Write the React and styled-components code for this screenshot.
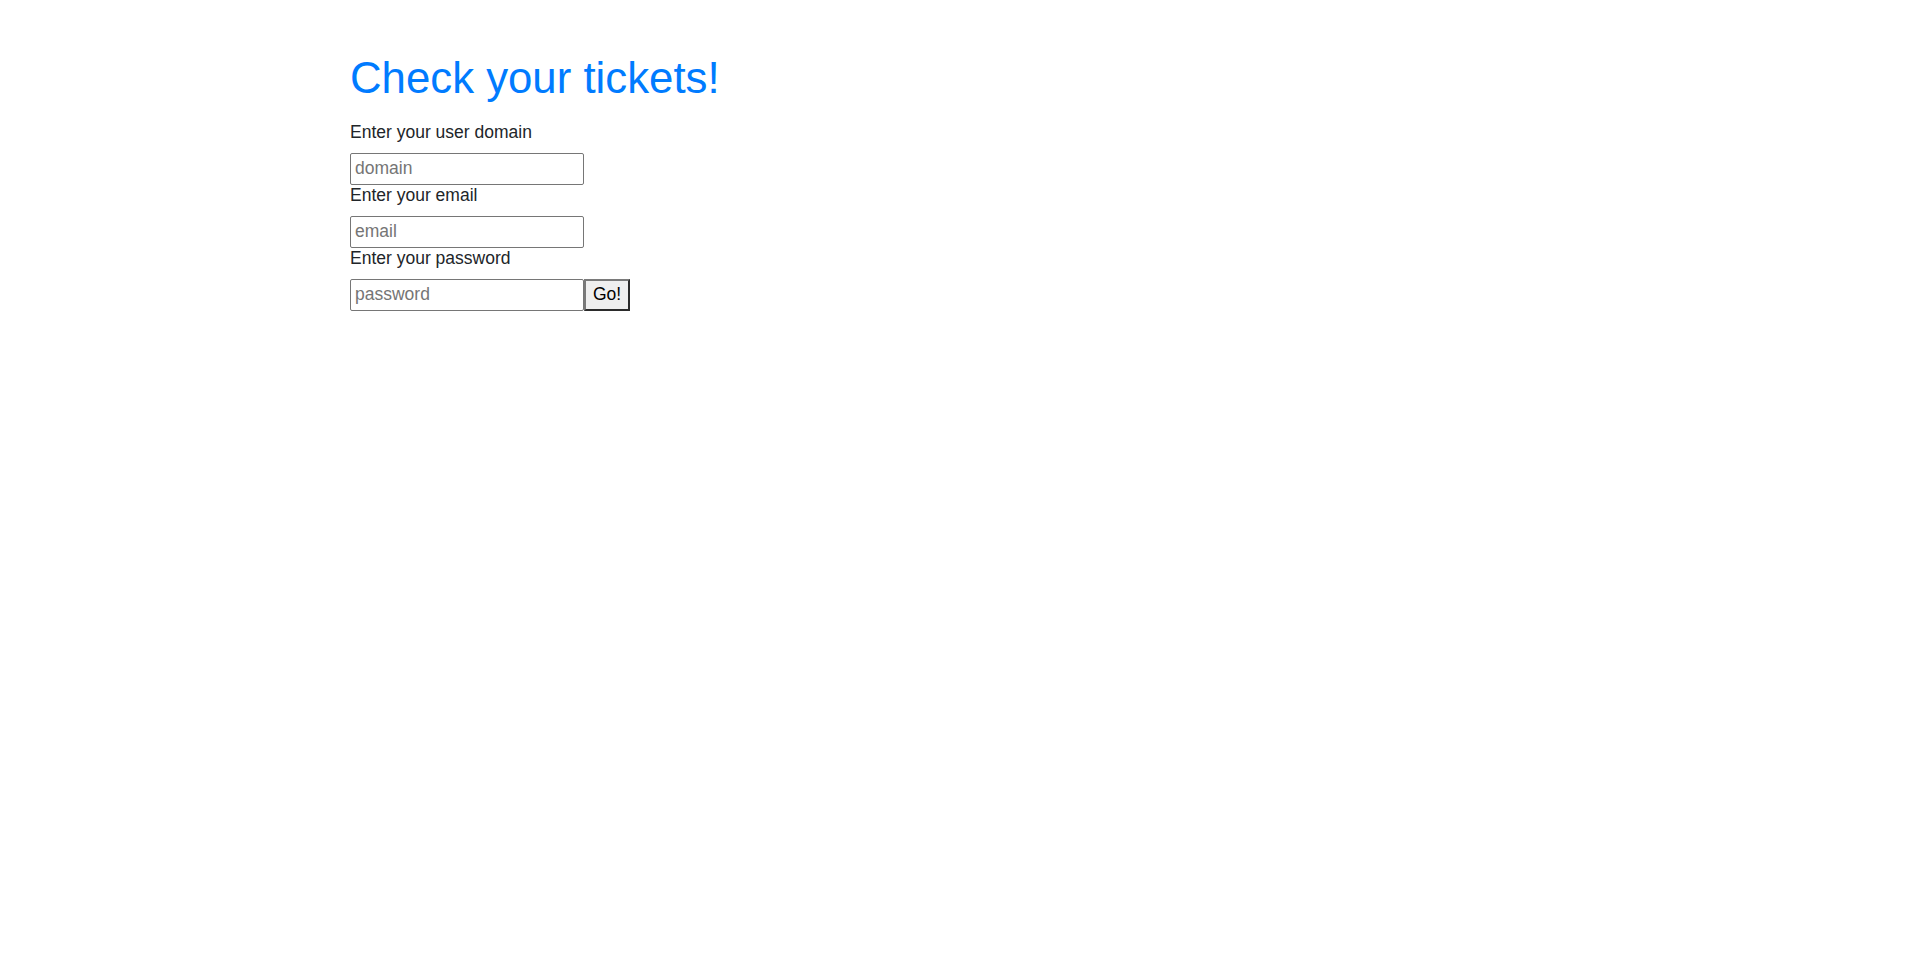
import React from "react";
import styled, { createGlobalStyle } from "styled-components";

const Global = createGlobalStyle`
  html, body { margin: 0; padding: 0; background: #fff; }
  body {
    font-family: "Liberation Sans", Arial, sans-serif;
    font-size: 17.5px;
    color: #212529;
  }
`;

const Page = styled.main`
  padding: 52px 0 0 350px;
`;

const Title = styled.h1`
  margin: 0 0 17px;
  font-size: 43.75px;
  font-weight: 400;
  line-height: 1.2;
  color: #007bff;
`;

const Form = styled.form`
  display: flex;
  flex-direction: column;
  align-items: flex-start;
`;

const Label = styled.label`
  display: block;
  line-height: 21px;
  margin: 0 0 10px;
`;

const Row = styled.div`
  display: flex;
  align-items: stretch;
`;

const Input = styled.input`
  box-sizing: border-box;
  width: 234px;
  height: 32px;
  margin: 0;
  padding: 1px 4px;
  border: 1px solid #767676;
  border-radius: 2px;
  font-family: "Liberation Sans", Arial, sans-serif;
  font-size: 17.5px;
  color: #212529;
  background: #fff;
  &::placeholder { color: #757575; }
`;

const Button = styled.button`
  box-sizing: border-box;
  width: 46px;
  height: 32px;
  margin: 0;
  padding: 0 6px;
  background: #efefef;
  border-style: solid;
  border-width: 2px;
  border-color: #7a7a7a #2b2b2b #2b2b2b #7a7a7a;
  font-family: "Liberation Sans", Arial, sans-serif;
  font-size: 17.5px;
  color: #000;
`;

export default function App() {
  return (
    <>
      <Global />
      <Page>
        <Title>Check your tickets!</Title>
        <Form onSubmit={(e) => e.preventDefault()}>
          <Label htmlFor="domain">Enter your user domain</Label>
          <Row>
            <Input id="domain" placeholder="domain" />
          </Row>
          <Label htmlFor="email">Enter your email</Label>
          <Row>
            <Input id="email" placeholder="email" />
          </Row>
          <Label htmlFor="password">Enter your password</Label>
          <Row>
            <Input id="password" type="password" placeholder="password" />
            <Button type="submit">Go!</Button>
          </Row>
        </Form>
      </Page>
    </>
  );
}
